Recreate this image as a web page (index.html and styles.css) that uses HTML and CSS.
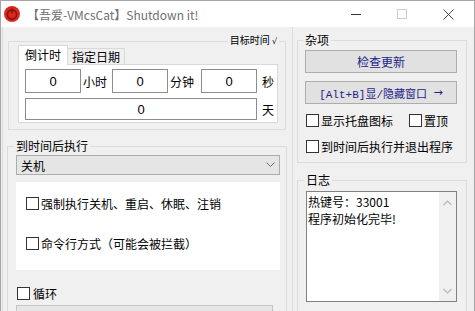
FILE: index.html
```html
<!DOCTYPE html>
<html lang="zh-CN">
<head>
  <meta charset="UTF-8" />
  <meta name="viewport" content="width=device-width, initial-scale=1.0"/>
  <title>Shutdown it!</title>
  <link rel="stylesheet" href="styles.css">
</head>
<body>

<div class="window">

  <!-- Title bar -->
  <div class="titlebar">
    <svg class="app-icon" width="18" height="18" viewBox="0 0 18 18">
      <circle cx="9" cy="9" r="8" fill="#d8281f"/>
      <circle cx="9" cy="9.5" r="4.6" fill="none" stroke="#8f0f09" stroke-width="1.6"/>
      <line x1="9" y1="3.6" x2="9" y2="8.4" stroke="#8f0f09" stroke-width="1.6"/>
    </svg>
    <span class="title">【吾爱-VMcsCat】Shutdown it!</span>
    <div class="controls">
      <span class="ctl">
        <svg width="10" height="10" viewBox="0 0 10 10"><line x1="0" y1="5.5" x2="10" y2="5.5" stroke="#333" stroke-width="1"/></svg>
      </span>
      <span class="ctl">
        <svg width="10" height="10" viewBox="0 0 10 10"><rect x="0.5" y="0.5" width="9" height="9" fill="none" stroke="#cfcfcf" stroke-width="1"/></svg>
      </span>
      <span class="ctl">
        <svg width="11" height="11" viewBox="0 0 11 11"><path d="M0.5 0.5 L10.5 10.5 M10.5 0.5 L0.5 10.5" stroke="#444" stroke-width="1"/></svg>
      </span>
    </div>
  </div>

  <div class="client">

    <!-- Left side -->
    <div class="left-panel">

      <fieldset class="group target">
        <legend>目标时间 <span class="tick">√</span></legend>
        <div class="tabs">
          <span class="tab active">倒计时</span>
          <span class="tab">指定日期</span>
        </div>
        <div class="tab-panel">
          <div class="time-row">
            <input class="num" type="text" value="0" />
            <span class="unit u-hour">小时</span>
            <input class="num" type="text" value="0" />
            <span class="unit u-min">分钟</span>
            <input class="num" type="text" value="0" />
            <span class="unit u-end">秒</span>
          </div>
          <div class="time-row day-row">
            <input class="num wide" type="text" value="0" />
            <span class="unit u-end">天</span>
          </div>
        </div>
      </fieldset>

      <fieldset class="group action">
        <legend>到时间后执行</legend>
        <div class="combo">
          <span>关机</span>
          <svg width="9" height="6" viewBox="0 0 9 6"><path d="M0.5 0.5 L4.5 4.5 L8.5 0.5" fill="none" stroke="#6d6d6d" stroke-width="1"/></svg>
        </div>
        <div class="options">
          <label class="check"><span class="box"></span>强制执行关机、重启、休眠、注销</label>
          <label class="check opt2"><span class="box"></span>命令行方式（可能会被拦截）</label>
        </div>
        <label class="check loop"><span class="box"></span>循环</label>
        <div class="progress"></div>
      </fieldset>

    </div>

    <!-- Right side -->
    <div class="right-panel">

      <fieldset class="group misc">
        <legend>杂项</legend>
        <div class="btn">检查更新</div>
        <div class="btn mono">[Alt+B]显/隐藏窗口 <span class="arrow">→</span></div>
        <div class="check-line first">
          <label class="check"><span class="box"></span>显示托盘图标</label>
          <label class="check topmost"><span class="box"></span>置顶</label>
        </div>
        <div class="check-line second">
          <label class="check"><span class="box"></span>到时间后执行并退出程序</label>
        </div>
      </fieldset>

      <fieldset class="group log">
        <legend>日志</legend>
        <div class="log-box">
          <div class="log-text">
            <div>热键号：33001</div>
            <div>程序初始化完毕!</div>
          </div>
          <div class="scrollbar">
            <svg width="9" height="6" viewBox="0 0 9 6"><path d="M0.5 5 L4.5 1 L8.5 5" fill="none" stroke="#b5b5b5" stroke-width="1.2"/></svg>
            <svg width="9" height="6" viewBox="0 0 9 6"><path d="M0.5 1 L4.5 5 L8.5 1" fill="none" stroke="#b5b5b5" stroke-width="1.2"/></svg>
          </div>
        </div>
      </fieldset>

    </div>
  </div>
</div>

</body>
</html>
```

FILE: styles.css
```css
* {
  box-sizing: border-box;
}
body {
  margin: 0;
  font-family: "Noto Sans CJK SC", "Liberation Sans", sans-serif;
  font-size: 12px;
  color: #000;
  background: #f0f0f0;
}
.window {
  width: 475px;
  height: 311px;
  border: 1px solid #a6a6a6;
  border-bottom: none;
  background: #f0f0f0;
  overflow: hidden;
  display: flex;
  flex-direction: column;
}

/* title bar */
.titlebar {
  height: 26px;
  flex-shrink: 0;
  background: #fff;
  display: flex;
  align-items: center;
}
.app-icon {
  margin-left: 2px;
}
.title {
  margin-left: 6px;
  color: #707070;
  font-size: 12px;
}
.controls {
  margin-left: auto;
  margin-right: 3px;
  display: flex;
  height: 100%;
}
.ctl {
  width: 46px;
  display: flex;
  align-items: center;
  justify-content: center;
}

/* client area */
.client {
  flex: 1;
  display: flex;
  align-items: flex-start;
  padding-left: 1px;
}
.left-panel {
  width: 291px;
  height: 284px;
  border-left: 1px solid #dcdcdc;
  border-right: 1px solid #dcdcdc;
  padding: 7px 6px 0 5px;
}
.right-panel {
  width: 170px;
  margin-left: 4px;
  padding-top: 6px;
}

.group {
  margin: 0;
  min-width: 0;
  border: 1px solid #dcdcdc;
}
.group legend {
  padding: 0 2px;
  margin-left: -2px;
  line-height: 14px;
}

/* target time */
.target {
  width: 278px;
  padding: 0 6px 6px 9px;
}
.target legend {
  margin-left: auto;
  margin-right: 0;
  font-size: 10px;
  line-height: 12px;
}
.tick {
  font-family: "DejaVu Sans", sans-serif;
  font-size: 8px;
}
.tabs {
  display: flex;
  align-items: flex-end;
  margin-top: -3px;
}
.tab {
  height: 16px;
  width: 57px;
  line-height: 15px;
  text-align: center;
  background: #f0f0f0;
  border: 1px solid #d9d9d9;
  border-left: none;
  border-bottom: none;
}
.tab.active {
  position: relative;
  z-index: 1;
  width: 50px;
  height: 20px;
  line-height: 18px;
  margin-bottom: -1px;
  background: #fff;
  border-left: 1px solid #d9d9d9;
}
.tab-panel {
  width: 260px;
  height: 59px;
  background: #fff;
  border: 1px solid #d9d9d9;
  padding: 4px 0 0 6px;
}
.time-row {
  display: flex;
  align-items: center;
  height: 24px;
}
.day-row {
  height: 22px;
  margin-top: 5px;
}
.num {
  width: 56px;
  height: 100%;
  margin: 0;
  padding: 0;
  border: 1px solid #8d8d8d;
  background: #fff;
  text-align: center;
  font-family: "Liberation Sans", sans-serif;
  font-size: 13px;
  color: #000;
}
.num.wide {
  width: 232px;
}
.unit {
  padding-left: 2px;
}
.u-hour {
  width: 31px;
}
.u-min {
  width: 33px;
}
.u-end {
  padding-left: 5px;
}

/* action */
.action {
  width: 280px;
  height: 200px;
  margin: 9px -1px 0 -1px;
  padding: 2px 6px 0 8px;
}
.combo {
  width: 264px;
  height: 20px;
  display: flex;
  justify-content: space-between;
  align-items: center;
  padding: 0 4px;
  background: #e5e5e5;
  border: 1px solid #adadad;
}
.options {
  width: 264px;
  height: 88px;
  margin-top: 7px;
  background: #fff;
  padding: 14px 0 0 10px;
}
.check {
  display: flex;
  align-items: center;
  height: 14px;
}
.box {
  width: 13px;
  height: 13px;
  margin-right: 2px;
  border: 1px solid #333;
  background: #fff;
}
.opt2 {
  margin-top: 26px;
}
.loop {
  margin: 16px 0 0 1px;
}
.loop .box {
  margin-right: 3px;
}
.progress {
  width: 257px;
  height: 7px;
  margin-top: 5px;
  background: #e6e6e6;
  border: 1px solid #c4c4c4;
}

/* misc */
.misc {
  width: 170px;
  padding: 3px 9px 9px 7px;
}
.btn {
  height: 23px;
  display: flex;
  align-items: center;
  justify-content: center;
  background: #e1e1e1;
  border: 1px solid #adadad;
  color: #1d1d8a;
}
.btn.mono {
  margin-top: 8px;
  font-family: "Liberation Mono", "Noto Sans CJK SC", monospace;
  font-size: 11px;
  white-space: pre;
}
.arrow {
  font-family: "DejaVu Sans", sans-serif;
  font-size: 11px;
}
.check-line {
  display: flex;
  padding-left: 1px;
}
.check-line.first {
  margin-top: 9px;
}
.check-line.second {
  margin-top: 12px;
}
.topmost {
  margin-left: 16px;
}

/* log */
.log {
  width: 170px;
  height: 160px;
  margin-top: 10px;
  padding: 4px 9px 0 8px;
}
.log-box {
  height: 111px;
  display: flex;
  background: #fff;
  border: 1px solid #828282;
}
.log-text {
  flex: 1;
  padding: 1px 1px;
  line-height: 17px;
}
.scrollbar {
  width: 17px;
  background: #f0f0f0;
  display: flex;
  flex-direction: column;
  justify-content: space-between;
  align-items: center;
  padding: 8px 0 7px;
}
```
